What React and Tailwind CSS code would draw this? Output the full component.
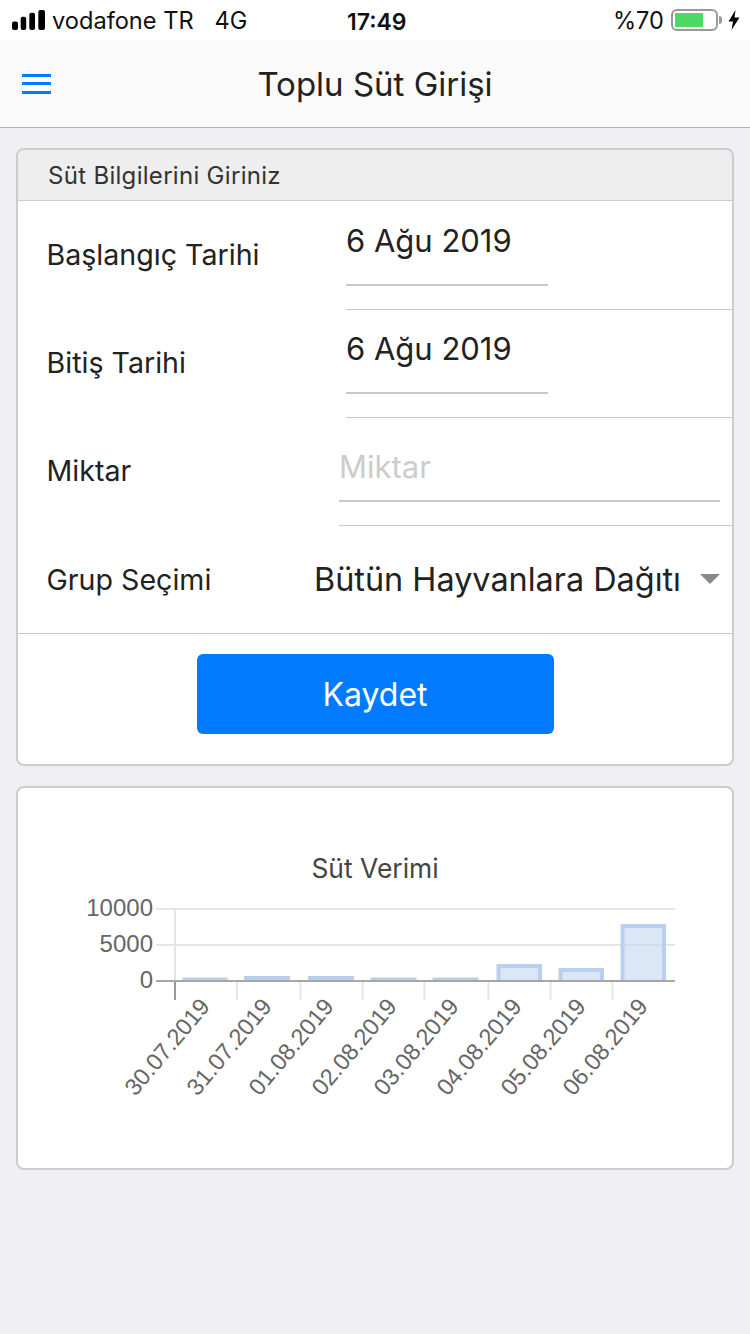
import React from "react";

const bars = [
  { x: 184.5, top: 979.5, w: 41 },
  { x: 246, top: 978, w: 42 },
  { x: 310, top: 978, w: 42 },
  { x: 372.5, top: 979.5, w: 42 },
  { x: 434.5, top: 979.5, w: 42 },
  { x: 498.5, top: 966, w: 41.5 },
  { x: 560.5, top: 970, w: 41.5 },
  { x: 622.5, top: 926, w: 41.5 },
];
const ticks = [175, 237, 300.5, 362.5, 424.5, 488.5, 550.5, 612.5];
const labels = [
  { text: "30.07.2019", x: 211 },
  { text: "31.07.2019", x: 273 },
  { text: "01.08.2019", x: 335 },
  { text: "02.08.2019", x: 398 },
  { text: "03.08.2019", x: 460 },
  { text: "04.08.2019", x: 523 },
  { text: "05.08.2019", x: 587 },
  { text: "06.08.2019", x: 649 },
];

function StatusBar() {
  return (
    <div className="h-10 bg-white flex items-center justify-between pl-3 pr-[10px] text-[23.6px] text-[#111] relative">
      <div className="flex items-center gap-[7px]">
        <svg width="33" height="20" viewBox="0 0 33 20" fill="#000">
          <rect x="0" y="11.5" width="6" height="8.5" rx="2" />
          <rect x="8.7" y="6.7" width="5.5" height="13.3" rx="2" />
          <rect x="17.3" y="2.7" width="5.7" height="17.3" rx="2" />
          <rect x="26.3" y="0" width="6.7" height="20" rx="2" />
        </svg>
        <span className="mr-[14px] mt-0.5">vodafone TR</span>
        <span className="mt-0.5">4G</span>
      </div>
      <div className="absolute left-[347px] top-[5px] font-semibold text-[23px]">17:49</div>
      <div className="flex items-center">
        <span className="mr-[7px] mt-0.5">%70</span>
        <div className="w-[47px] h-[22px] border-2 border-[#999] rounded-[6px] p-[2px] flex">
          <div className="w-[28px] h-[14px] bg-[#4cd964]" />
        </div>
        <div className="w-[3px] h-[8px] bg-[#999] rounded-r-sm mr-[6px] ml-[1px]" />
        <svg width="12" height="20" viewBox="0 0 12 20" fill="#000">
          <path d="M7.5 0 L0.5 11.5 H5 L3.5 20 L11.5 7.5 H6.5 Z" />
        </svg>
      </div>
    </div>
  );
}

function Navbar() {
  return (
    <div className="h-[88px] bg-[#fafafa] border-b border-[#b2b2b2] flex items-center relative">
      <div className="ml-[22px] w-[29px] flex flex-col gap-[5.5px]">
        <div className="h-[3px] bg-[#007aff]" />
        <div className="h-[3px] bg-[#007aff]" />
        <div className="h-[3px] bg-[#007aff]" />
      </div>
      <div className="absolute inset-x-0 mt-0.5 text-center text-[33px] font-normal text-[#222]">Toplu Süt Girişi</div>
    </div>
  );
}

function DateRow({ label, value }) {
  return (
    <div className="h-[108px] flex relative">
      <div className="w-[328px] pl-[28.5px] pt-[34px] text-[28.6px] leading-[38px] text-[#222]">{label}</div>
      <div className="flex-1 border-b border-[#c8c7cc]">
        <div className="w-[202px] h-[84px] border-b-2 border-[#c8c7cc] pt-[18px] text-[31px] leading-[42px] text-[#222]">{value}</div>
      </div>
    </div>
  );
}

function Chart() {
  return (
    <svg className="block" width="714" height="380" viewBox="18 788 714 380" style={{ fontFamily: '"Liberation Sans", Arial, sans-serif' }}>
      <text x="375" y="878" textAnchor="middle" fontSize="26.4" fill="#444" style={{ fontFamily: "Inter, sans-serif" }}>Süt Verimi</text>
      <line x1="156" x2="675" y1="909" y2="909" stroke="#e5e5e5" strokeWidth="2" />
      <line x1="156" x2="675" y1="945" y2="945" stroke="#e5e5e5" strokeWidth="2" />
      {ticks.map((x, i) => (
        <line key={x} x1={x} x2={x} y1={i === 0 ? 909 : 981} y2="1000" stroke="#e5e5e5" strokeWidth="2" />
      ))}
      <line x1="175" x2="175" y1="981" y2="1000" stroke="#999" strokeWidth="2" />
      {bars.map((b) => (
        <g key={b.x}>
          <rect x={b.x} y={b.top} width={b.w} height={981 - b.top} fill="#c3d6f0" fillOpacity="0.6" />
          <path d={`M${b.x} 981 V${b.top} H${b.x + b.w} V981`} fill="none" stroke="#b9cfee" strokeWidth="4" />
        </g>
      ))}
      <line x1="156" x2="675" y1="981" y2="981" stroke="#a6a6a6" strokeWidth="2" />
      <text x="153" y="916" textAnchor="end" fontSize="24" fill="#666">10000</text>
      <text x="153" y="952" textAnchor="end" fontSize="24" fill="#666">5000</text>
      <text x="153" y="988" textAnchor="end" fontSize="24" fill="#666">0</text>
      {labels.map((l) => (
        <text key={l.text} x={l.x} y="1007" textAnchor="end" fontSize="23.5" fill="#666" transform={`rotate(-50 ${l.x} 1007)`}>{l.text}</text>
      ))}
    </svg>
  );
}

export default function App() {
  return (
    <div className="w-[750px] h-[1334px] bg-[#efeff4] font-['Inter',sans-serif] overflow-hidden">
      <StatusBar />
      <Navbar />
      <div className="px-4 pt-5">
        <div className="h-[618px] bg-white border-2 border-[#ccc] rounded-lg overflow-hidden">
          <div className="h-[51px] mb-px bg-[#eee] border-b border-[#ccc] pl-[30px] pt-[11px] text-[24px] leading-[30px] tracking-[0.3px] text-[#333]">Süt Bilgilerini Giriniz</div>
          <DateRow label="Başlangıç Tarihi" value="6 Ağu 2019" />
          <DateRow label="Bitiş Tarihi" value="6 Ağu 2019" />
          <div className="h-[108px] flex">
            <div className="w-[321px] pl-[28.5px] pt-[34px] text-[28.6px] leading-[38px] text-[#222]">Miktar</div>
            <div className="flex-1 border-b border-[#c8c7cc]">
              <div className="w-[381px] h-[84px] border-b-2 border-[#c8c7cc]">
                <input placeholder="Miktar" className="w-full pt-[29px] text-[31px] leading-[40px] placeholder:text-[#cccccc] outline-none" />
              </div>
            </div>
          </div>
          <div className="h-[108px] flex items-center border-b border-[#c8c7cc] relative">
            <div className="w-[296px] pl-[28.5px] text-[28.6px] leading-[38px] text-[#222] mt-[1px]">Grup Seçimi</div>
            <div className="text-[32.4px] leading-[42px] text-[#222] whitespace-nowrap">Bütün Hayvanlara Dağıtı</div>
            <div className="absolute right-[12px] top-[48px] w-0 h-0 border-x-[10px] border-x-transparent border-t-[10px] border-t-[#888]" />
          </div>
          <div className="flex justify-center pt-5">
            <button className="w-[357px] h-20 pt-0.5 bg-[#007aff] rounded-md text-white text-[32px]">Kaydet</button>
          </div>
        </div>
        <div className="h-[384px] mt-5 bg-white border-2 border-[#ccc] rounded-lg overflow-hidden">
          <Chart />
        </div>
      </div>
    </div>
  );
}
